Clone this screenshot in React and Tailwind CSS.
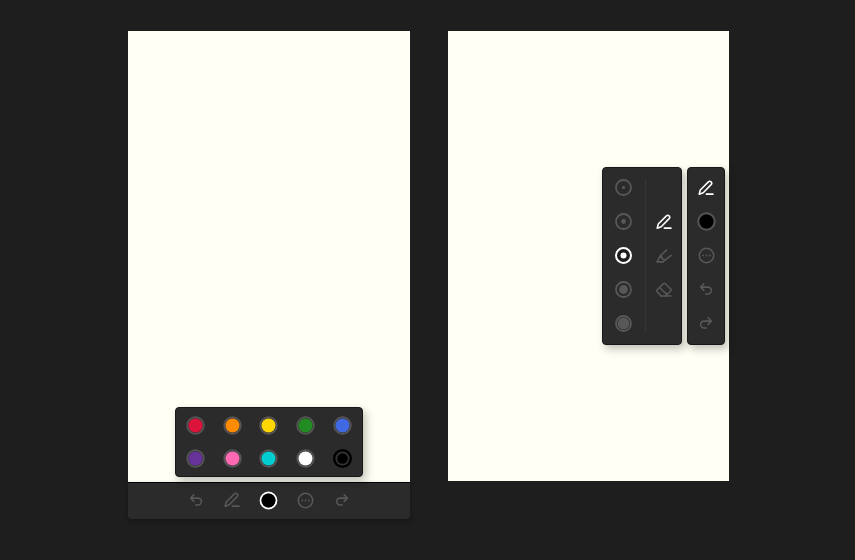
import React from "react";

const palette = [
  { name: "Red", fill: "#dc143c" },
  { name: "Orange", fill: "#ff8c00" },
  { name: "Yellow", fill: "#ffd700" },
  { name: "Green", fill: "#228b22" },
  { name: "Blue", fill: "#4169e1" },
  { name: "Purple", fill: "#663399" },
  { name: "Pink", fill: "#ff69b4" },
  { name: "Turquoise", fill: "#00ced1" },
  { name: "White", fill: "#ffffff" },
  { name: "Black", fill: "#000000", selected: true },
];

const sizes = [
  { name: "Extra small", r: 1.6 },
  { name: "Small", r: 2.4 },
  { name: "Medium", r: 3, selected: true },
  { name: "Large", r: 4.4 },
  { name: "Extra large", r: 5.9 },
];

function ToolButton({ label, active, children }) {
  return (
    <button
      type="button"
      aria-label={label}
      className={
        "flex items-center justify-center " + (active ? "text-white" : "text-[#585858]")
      }
    >
      {children}
    </button>
  );
}

function LineIcon({ children }) {
  return (
    <svg
      className="size-4"
      viewBox="0 0 24 24"
      fill="none"
      stroke="currentColor"
      strokeWidth="2.3"
      strokeLinecap="round"
      strokeLinejoin="round"
      aria-hidden="true"
    >
      {children}
    </svg>
  );
}

const PenIcon = () => (
  <LineIcon>
    <path d="M1.800 21.4l1.600-6.4L15.6 2.800a2.900 2.900 0 0 1 4.100 4.100L7.800 19.2z" />
    <path d="M12.5 21.2h10" />
  </LineIcon>
);

const HighlighterIcon = () => (
  <LineIcon>
    <path d="M15.8 3.2L6.4 11.6l.8 2.6M8.400 12.800c-.4 2.200 1.800 4.700 5 5.300L22.8 11.200" />
    <path d="M5.800 13L1.400 20.800h9.400l2.600-2.700" />
  </LineIcon>
);

const EraserIcon = () => (
  <LineIcon>
    <path d="M7.5 20.8l-5.7-6.2a2.2 2.2 0 0 1 0-3.1L10.9 2.6a2.2 2.2 0 0 1 3.1 0l8 7.900a2.2 2.2 0 0 1 0 3.1L14.5 20.8" />
    <path d="M5.2 8.2l11.6 10.8M7.5 21h15" />
  </LineIcon>
);

const UndoIcon = () => (
  <LineIcon>
    <path d="M8.8 4.2L4 9.2l4.8 4.8M4.5 9.2h10.4a5.1 5.1 0 0 1 0 10.3h-3.4" />
  </LineIcon>
);

const RedoIcon = () => (
  <LineIcon>
    <path d="M15.2 4.2L20 9.2l-4.8 4.8M19.5 9.2H9.1a5.1 5.1 0 0 0 0 10.3h3.4" />
  </LineIcon>
);

const MoreIcon = () => (
  <svg className="size-[21px]" viewBox="0 0 21 21" fill="none" aria-hidden="true">
    <circle cx="10.5" cy="10.5" r="7.2" stroke="currentColor" strokeWidth="1.5" />
    <circle cx="7.1" cy="10.5" r="0.9" fill="currentColor" />
    <circle cx="10.5" cy="10.5" r="0.9" fill="currentColor" />
    <circle cx="13.9" cy="10.5" r="0.9" fill="currentColor" />
  </svg>
);

const Swatch = ({ fill, ring, radius, ringWidth = 1.8, ringRadius = 8.3 }) => (
  <svg className="size-[21px]" viewBox="0 0 21 21" aria-hidden="true">
    <circle
      cx="10.5"
      cy="10.5"
      r={ringRadius}
      fill="#343434"
      stroke={ring}
      strokeWidth={ringWidth}
    />
    <circle cx="10.5" cy="10.5" r={radius} fill={fill} />
  </svg>
);

const SizeIcon = ({ r, selected }) => (
  <svg className="size-[21px]" viewBox="0 0 21 21" fill="none" aria-hidden="true">
    <circle
      cx="10.5"
      cy="10.5"
      r="7.5"
      fill={selected ? "#1c1c1c" : "none"}
      stroke="currentColor"
      strokeWidth={selected ? 2 : 1.8}
    />
    <circle cx="10.5" cy="10.5" r={r} fill="currentColor" />
  </svg>
);

export default function App() {
  return (
    <main className="flex min-h-screen items-start justify-center gap-[38px] bg-[#1e1e1e] pt-[31px] pl-0.5">
      <section aria-label="Portrait canvas" className="w-[282px]">
        <div className="flex h-[451px] flex-col items-center justify-end bg-[#fffff5] pb-[5px]">
          <div className="grid w-[188px] grid-cols-5 rounded border border-[#181818] bg-[#2b2b2b] p-px shadow-[3px_4px_8px_rgba(0,0,0,0.25)]">
            {palette.map((c) => (
              <button
                key={c.name}
                type="button"
                aria-label={c.name}
                className="flex h-[33px] items-center justify-center"
              >
                <Swatch
                  fill={c.fill}
                  ring={c.selected ? "#000000" : "#555555"}
                  ringWidth={c.selected ? 2.4 : 1.8}
                  radius={c.selected ? 5.3 : 7}
                />
              </button>
            ))}
          </div>
        </div>
        <div
          role="toolbar"
          aria-label="Drawing tools"
          className="flex h-[37px] justify-center rounded-b border-t border-black bg-[#2b2b2b] pb-0.5 shadow-[0_2px_5px_rgba(0,0,0,0.3)]"
        >
          <div className="grid w-[183px] grid-cols-5">
            <ToolButton label="Undo"><UndoIcon /></ToolButton>
            <ToolButton label="Pen"><PenIcon /></ToolButton>
            <ToolButton label="Color" active>
              <Swatch fill="#000000" ring="#ffffff" radius={7} ringRadius={7.9} ringWidth={2} />
            </ToolButton>
            <ToolButton label="More"><MoreIcon /></ToolButton>
            <ToolButton label="Redo"><RedoIcon /></ToolButton>
          </div>
        </div>
      </section>

      <section
        aria-label="Side toolbar canvas"
        className="flex h-[450px] w-[281px] items-start justify-end gap-[5px] bg-[#fffff5] pt-[136px] pr-1"
      >
        <div className="flex h-[178px] w-20 rounded border border-[#181818] bg-[#2b2b2b] pt-[3px] pb-1 shadow-[3px_4px_8px_rgba(0,0,0,0.25)]">
          <div className="grid w-10 grid-rows-5">
            {sizes.map((s) => (
              <ToolButton key={s.name} label={s.name} active={s.selected}>
                <SizeIcon r={s.r} selected={s.selected} />
              </ToolButton>
            ))}
          </div>
          <div className="my-2 ml-0.5 w-px bg-[#363636]" />
          <div className="grid flex-1 grid-rows-[repeat(3,34px)] content-center">
            <ToolButton label="Pen" active><PenIcon /></ToolButton>
            <ToolButton label="Highlighter"><HighlighterIcon /></ToolButton>
            <ToolButton label="Eraser"><EraserIcon /></ToolButton>
          </div>
        </div>
        <div
          role="toolbar"
          aria-label="Drawing tools"
          className="grid h-[178px] w-[38px] grid-rows-5 rounded border border-[#181818] bg-[#2b2b2b] pt-[3px] pb-1 shadow-[3px_4px_8px_rgba(0,0,0,0.25)]"
        >
          <ToolButton label="Pen" active><PenIcon /></ToolButton>
          <ToolButton label="Color">
            <Swatch fill="#000000" ring="#555555" radius={7} />
          </ToolButton>
          <ToolButton label="More"><MoreIcon /></ToolButton>
          <ToolButton label="Undo"><UndoIcon /></ToolButton>
          <ToolButton label="Redo"><RedoIcon /></ToolButton>
        </div>
      </section>
    </main>
  );
}
